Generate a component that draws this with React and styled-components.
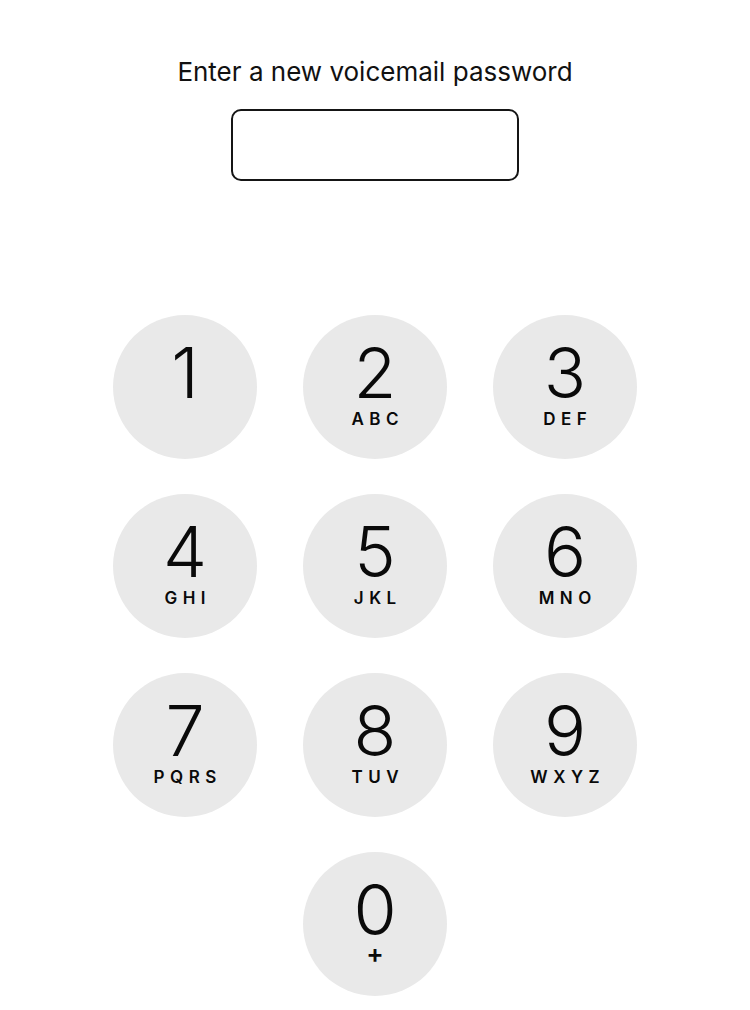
import React, { useState } from 'react'
import styled, { createGlobalStyle } from 'styled-components'

const GlobalStyle = createGlobalStyle`
  body {
    margin: 0;
    background-color: #ffffff;
    font-family: Inter, "Liberation Sans", sans-serif;
  }
`

const Screen = styled.div`
  display: flex;
  flex-direction: column;
  align-items: center;
  padding-top: 57px;
  min-height: 100vh;
  box-sizing: border-box;
`

const Title = styled.div`
  font-size: 26px;
  line-height: 30px;
  color: #111111;
`

const PasswordBox = styled.input`
  margin-top: 22px;
  width: 288px;
  height: 72px;
  box-sizing: border-box;
  border: 2px solid #151515;
  border-radius: 10px;
  background: #ffffff;
  font-size: 28px;
  text-align: center;
  outline: none;
`

const Keypad = styled.div`
  margin-top: 134px;
  display: grid;
  grid-template-columns: repeat(3, 144px);
  column-gap: 46px;
  row-gap: 35px;
`

const Key = styled.button`
  grid-column: ${p => p.$col || 'auto'};
  width: 144px;
  height: 144px;
  border: none;
  border-radius: 50%;
  background-color: #e9e9e9;
  display: flex;
  flex-direction: column;
  align-items: center;
  padding: 28px 0 0 0;
  box-sizing: border-box;
  cursor: pointer;
  font-family: Inter, "Liberation Sans", sans-serif;
  color: #0a0a0a;
  &:active {
    background-color: #d2d2d2;
  }
`

const Digit = styled.span`
  font-size: 70px;
  line-height: 60px;
  font-weight: 300;
`

const Letters = styled.span`
  margin-top: ${p => (p.$plus ? '4px' : '8px')};
  font-size: ${p => (p.$plus ? '26px' : '17px')};
  line-height: ${p => (p.$plus ? '20px' : '17px')};
  font-weight: 600;
  letter-spacing: ${p => (p.$plus ? '0' : '5.5px')};
  padding-left: ${p => (p.$plus ? '0' : '5.5px')};
`

const keys = [
  ['1', ''],
  ['2', 'ABC'],
  ['3', 'DEF'],
  ['4', 'GHI'],
  ['5', 'JKL'],
  ['6', 'MNO'],
  ['7', 'PQRS'],
  ['8', 'TUV'],
  ['9', 'WXYZ'],
  ['0', '+'],
]

function App() {
  const [value, setValue] = useState('')
  const press = digit => setValue(v => v + digit)

  return (
    <Screen>
      <GlobalStyle />
      <Title>Enter a new voicemail password</Title>
      <PasswordBox
        type="password"
        value={value}
        onChange={e => setValue(e.target.value)}
      />
      <Keypad>
        {keys.map(([digit, letters]) => (
          <Key
            key={digit}
            $col={digit === '0' ? 2 : undefined}
            onClick={() => press(digit)}>
            <Digit>{digit}</Digit>
            {letters && <Letters $plus={letters === '+'}>{letters}</Letters>}
          </Key>
        ))}
      </Keypad>
    </Screen>
  )
}

export default App
